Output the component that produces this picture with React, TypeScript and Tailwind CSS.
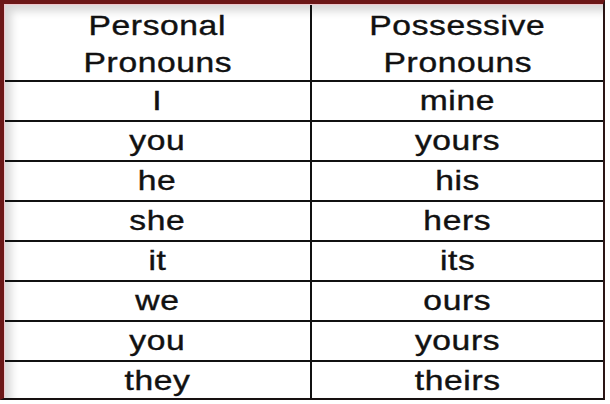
import React from "react";

const rows: [string, string][] = [
  ["I", "mine"],
  ["you", "yours"],
  ["he", "his"],
  ["she", "hers"],
  ["it", "its"],
  ["we", "ours"],
  ["you", "yours"],
  ["they", "theirs"],
];

function Txt({ children }: { children: React.ReactNode }) {
  return (
    <span className="inline-block scale-x-[1.2] tracking-[0.5px] [-webkit-text-stroke:0.4px_#111]">
      {children}
    </span>
  );
}

export default function App() {
  return (
    <div
      className="w-[610px] h-[404px] bg-white text-[#111] text-[28px]"
      style={{ fontFamily: '"Liberation Sans", Arial, sans-serif' }}
    >
      <div className="w-[605px] h-[400px] border-t-4 border-l-4 border-[#6c1717] border-r-2 border-r-[#2a1414] border-b-2 border-b-[#161010]">
        <div className="h-full border-t border-l border-[#efc6cc] shadow-[inset_6px_6px_9px_rgba(0,0,0,0.16)] grid grid-cols-[305px_1fr] grid-rows-[75px_repeat(7,40px)_38px]">
          <div className="flex flex-col items-center pt-[2px] leading-[37px]">
            <Txt>Personal</Txt>
            <Txt>Pronouns</Txt>
          </div>
          <div className="flex flex-col items-center pt-[2px] leading-[37px] border-l-2 border-[#111]">
            <Txt>Possessive</Txt>
            <Txt>Pronouns</Txt>
          </div>
          {rows.map(([a, b], i) => (
            <React.Fragment key={i}>
              <div className="border-t-2 border-[#111] flex justify-center leading-[38px]">
                <Txt>{a}</Txt>
              </div>
              <div className="border-t-2 border-l-2 border-[#111] flex justify-center leading-[38px]">
                <Txt>{b}</Txt>
              </div>
            </React.Fragment>
          ))}
        </div>
      </div>
    </div>
  );
}
